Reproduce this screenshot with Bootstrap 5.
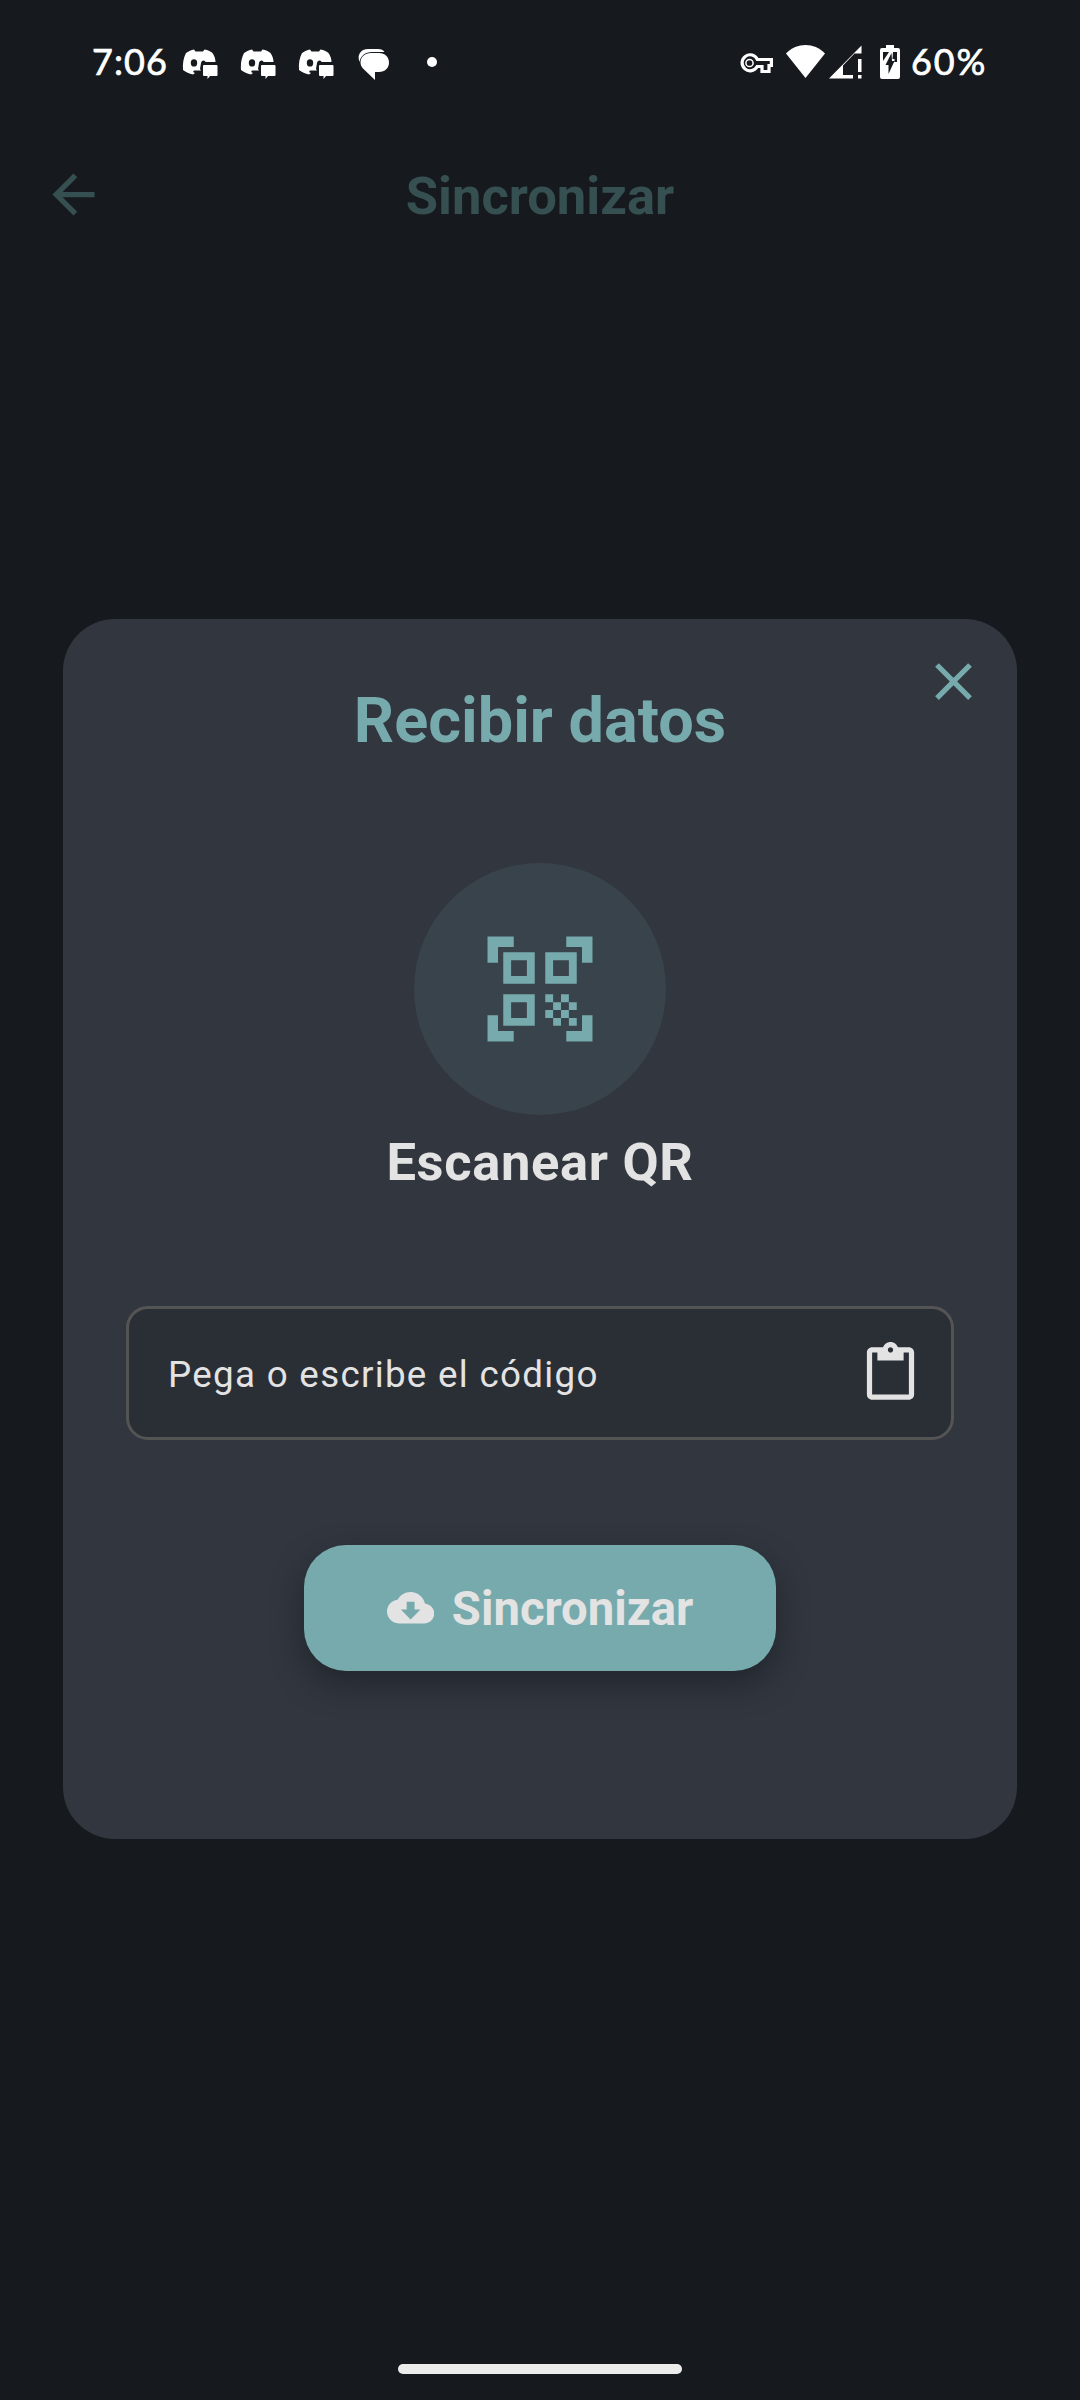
<!DOCTYPE html>
<html lang="es">
<head>
<meta charset="utf-8">
<meta name="viewport" content="width=device-width, initial-scale=1">
<title>Sincronizar</title>
<link rel="stylesheet" href="https://cdn.jsdelivr.net/npm/bootstrap@5.3.0/dist/css/bootstrap.min.css">
<style>
  :root { --teal: #76aaac; --ink: #e3e3e3; }
  html, body { height: 2400px; overflow: hidden; }
  body { background: #161a1e; font-family: Roboto, sans-serif; line-height: 1; }
  svg { display: block; flex: none; }
  .screen { width: 1080px; height: 2400px; }
  .status-bar { height: 124px; padding: 0 91px 0 91px; color: #fff; font-family: Lato, sans-serif; font-size: 36px; }
  .status-time { width: 91px; padding: 0 0 3px 1px; letter-spacing: 1.1px; -webkit-text-stroke: .7px #fff; }
  .status-pct { -webkit-text-stroke: .7px #fff; margin-left: 11px; padding-bottom: 3px; letter-spacing: 1.9px; white-space: nowrap; width: 78px; }
  .app-bar { height: 141px; padding: 0 42px; color: #365052; font-size: 52.5px; font-weight: 700; }
  .app-bar .side { width: 63px; height: 63px; }
  .app-title { padding-top: 3px; }
  .sync-dialog { margin-top: 353.5px; width: 954px; height: 1220px; background: #32363f; border-radius: 52px; padding: 0 63px; }
  .dialog-close { position: absolute; top: 31.5px; right: 32px; padding: 0; border: 0; background: none; color: var(--teal); }
  .dialog-title { margin: 69px 0 0; font-size: 63px; line-height: 66px; font-weight: 700; color: var(--teal); }
  .scan-circle { margin-top: 109.5px; width: 252px; height: 252px; background: #39434b; color: var(--teal); }
  .scan-label { margin-top: 16px; font-size: 52.5px; line-height: 62px; font-weight: 700; letter-spacing: .66px; color: var(--ink); }
  .code-field { margin-top: 113px; width: 828px; height: 134px; border: 3px solid #545454; border-radius: 22px; background: #2a2e35; color: var(--ink); padding: 0 29px 0 39px; font-size: 36.75px; letter-spacing: 1.3px; }
  .code-hint { padding-top: 4px; }
  .sync-btn, .sync-btn:hover { margin-top: 105px; width: 472px; height: 126px; border: 0; border-radius: 42px; background: var(--teal); color: var(--ink); font-size: 47.25px; font-weight: 700; line-height: 1; box-shadow: 0 13px 30px 0 rgba(18,22,25,.5); gap: 18px; }
  .sync-btn span { padding-top: 3px; }
  .home-bar { width: 284px; height: 10px; border-radius: 5px; background: #ececec; margin-bottom: 26px; }
</style>
</head>
<body>
<svg width="0" height="0" style="position:absolute" aria-hidden="true">
  <symbol id="chat-bot" viewBox="0 0 36 30">
    <path fill="#fff" fill-rule="evenodd" d="M4 4C7 2 9 1.200 12 .5L13.500 2.500H21L22.500 .5C26 1.200 28 2 30.500 4C32.500 7 33.500 10 33.500 13H23.500L23 12C21 10.500 19.500 12 19 14L18 20L19 21.500H12L11 23L13 24L11 25.500C7 24.500 4 23.500 1 21C.5 14 1.500 9 4 4ZM12 10.200A3.200 3.700 0 1 0 12 17.600A3.200 3.700 0 1 0 12 10.200Z"/>
    <path fill="#fff" d="M22 16H34.500Q35.500 16 35.500 17V26Q35.500 27 34.500 27H28L25.500 30V27H22Q21 27 21 26V17Q21 16 22 16Z"/>
  </symbol>
</svg>
<main class="screen d-flex flex-column align-items-center">
  <header class="status-bar w-100 d-flex align-items-center justify-content-between">
    <div class="d-flex align-items-center">
      <span class="status-time">7:06</span>
      <svg width="36" height="30" class="mt-1"><use href="#chat-bot"/></svg>
      <svg width="36" height="30" class="mt-1" style="margin-left:22px"><use href="#chat-bot"/></svg>
      <svg width="36" height="30" class="mt-1" style="margin-left:22px"><use href="#chat-bot"/></svg>
      <svg width="32" height="31" viewBox="0 0 32 31" class="mt-1" style="margin-left:24px">
        <path fill="#fff" d="M1.500 13C-1 7 2 0 10 0H20C23 0 25.500 1 26.500 3H14C7 3 2.500 7 1.500 13Z"/>
        <path fill="#fff" d="M13 4H21C27 4 31 8 31 13.500S27 23 21 23H17V31L5.500 20C3.500 18 2.500 16 2.500 13.500C2.500 8 7 4 13 4Z"/>
      </svg>
      <svg width="10" height="10" viewBox="0 0 10 10" style="margin-left:37px"><circle cx="5" cy="5" r="5" fill="#fff"/></svg>
    </div>
    <div class="d-flex align-items-center">
      <svg width="33" height="21" viewBox="0 0 33 21" style="margin-top:2px"><g fill="none" stroke="#fff" stroke-width="3.200"><path d="M17.400 6.500H31.400V12.500H29V18.500H22V13.500H17.200A8 8 0 1 1 17.400 6.500Z"/></g><circle cx="9.500" cy="10" r="3.600" fill="none" stroke="#fff" stroke-width="1.500"/></svg>
      <svg width="39" height="33" viewBox="0 0 39 33" style="margin-left:13px;margin-bottom:1px"><path fill="#fff" d="M0 8.500C11-2.800 28-2.800 39 8.500L19.500 33Z"/></svg>
      <svg width="33" height="34" viewBox="0 0 33 34" style="margin-left:4px;margin-bottom:1px"><path fill="#fff" d="M0 33.500L32.500 .5V8.500H25.500L14 20.500V30H24V33.500ZM29 14H32.500V27H29ZM29 30H32.500V33.500H29Z"/></svg>
      <svg width="20" height="34" viewBox="0 0 20 34" style="margin-left:18px;margin-bottom:1px"><path fill="#fff" d="M6 0H14V3H18Q20 3 20 5V32Q20 34 18 34H2Q0 34 0 32V5Q0 3 2 3H6Z"/><path fill="#161a1e" d="M3 7H9L3 16ZM13 7H17V17H14.500V14H12.500ZM11.500 8L12 16H14.500L8.500 29V20H5.500Z"/></svg>
      <span class="status-pct">60%</span>
    </div>
  </header>

  <nav class="app-bar w-100 d-flex align-items-center justify-content-between">
    <svg class="side" viewBox="0 0 24 24" fill="currentColor"><path d="M20 11H7.830l5.590-5.590L12 4l-8 8 8 8 1.410-1.410L7.830 13H20v-2z"/></svg>
    <span class="app-title">Sincronizar</span>
    <span class="side"></span>
  </nav>

  <section class="sync-dialog position-relative d-flex flex-column align-items-center" role="dialog" aria-labelledby="dlg-title">
    <button class="dialog-close" type="button" aria-label="Cerrar"><svg width="63" height="63" viewBox="0 0 24 24" fill="currentColor"><path d="M19 6.410L17.590 5 12 10.590 6.410 5 5 6.410 10.590 12 5 17.590 6.410 19 12 13.410 17.590 19 19 17.590 13.410 12z"/></svg></button>
    <h1 class="dialog-title" id="dlg-title">Recibir datos</h1>
    <div class="scan-circle rounded-circle d-flex align-items-center justify-content-center">
      <svg width="126" height="126" viewBox="0 0 24 24" fill="currentColor"><path d="M9.500 6.500v3h-3v-3h3M11 5H5v6h6V5zM9.500 14.500v3h-3v-3h3M11 13H5v6h6v-6zM17.500 6.500v3h-3v-3h3M19 5h-6v6h6V5zM13 13h1.500v1.500H13V13zM14.500 14.500H16V16h-1.500v-1.500zM16 13h1.500v1.500H16V13zM13 16h1.500v1.500H13V16zM14.500 17.500H16V19h-1.500v-1.500zM16 16h1.500v1.500H16V16zM17.500 14.500H19V16h-1.500v-1.500zM17.500 17.500H19V19h-1.500v-1.500zM22 7h-2V4h-3V2h5v5zM22 22v-5h-2v3h-3v2h5zM2 22h5v-2H4v-3H2v5zM2 2v5h2V4h3V2H2z"/></svg>
    </div>
    <div class="scan-label">Escanear QR</div>
    <div class="code-field d-flex align-items-center justify-content-between">
      <span class="code-hint">Pega o escribe el código</span>
      <svg width="63" height="63" viewBox="0 0 24 24" fill="currentColor"><path d="M19 2h-4.180C14.400.84 13.300 0 12 0c-1.300 0-2.400.84-2.820 2H5c-1.100 0-2 .9-2 2v16c0 1.100.9 2 2 2h14c1.100 0 2-.9 2-2V4c0-1.100-.9-2-2-2zm-7 0c.55 0 1 .45 1 1s-.45 1-1 1-1-.45-1-1 .45-1 1-1zm7 18H5V4h2v3h10V4h2v16z"/></svg>
    </div>
    <button class="sync-btn btn d-flex align-items-center justify-content-center" type="button">
      <svg width="47.250" height="47.250" viewBox="0 0 24 24" fill="currentColor"><path d="M19.350 10.040C18.670 6.590 15.640 4 12 4 9.110 4 6.600 5.640 5.350 8.040 2.340 8.360 0 10.910 0 14c0 3.310 2.690 6 6 6h13c2.760 0 5-2.240 5-5 0-2.640-2.050-4.780-4.650-4.960zM17 13l-5 5-5-5h3V9h4v4h3z"/></svg>
      <span>Sincronizar</span>
    </button>
  </section>
  <div class="home-bar mt-auto"></div>
</main>
<script src="https://cdn.jsdelivr.net/npm/bootstrap@5.3.0/dist/js/bootstrap.bundle.min.js"></script>
</body>
</html>
